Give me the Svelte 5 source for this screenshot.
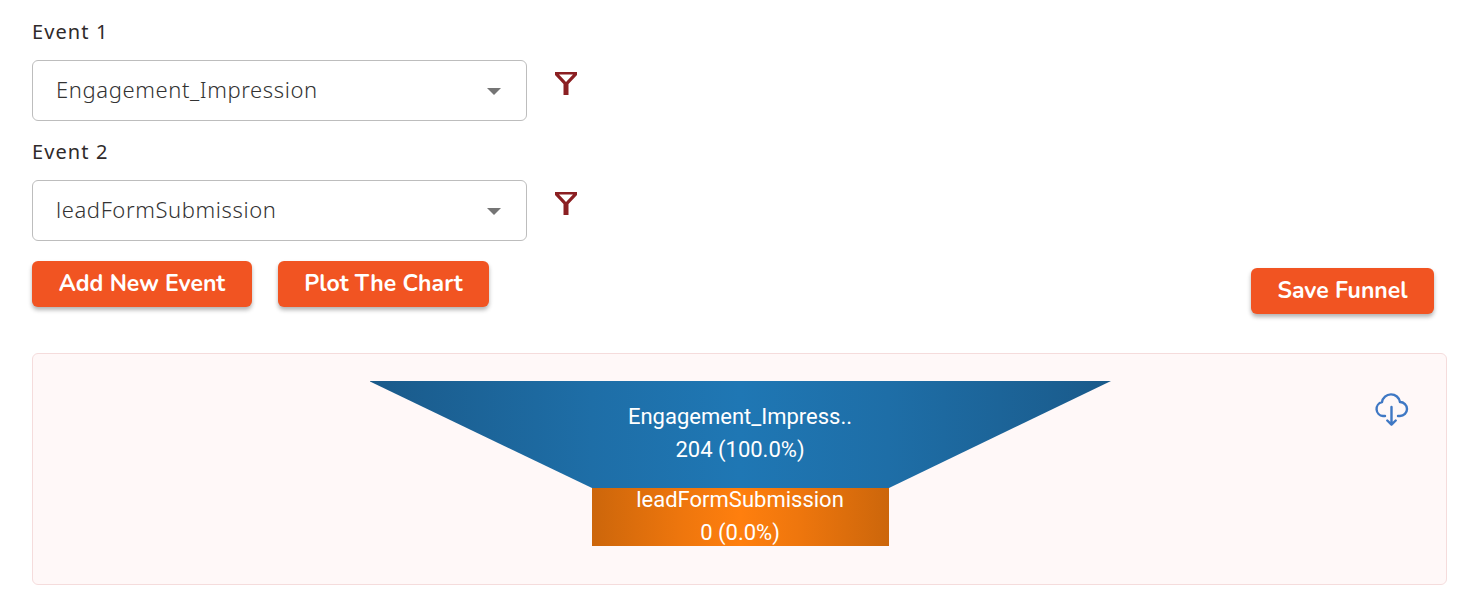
<script>
  const events = [
    { label: 'Event 1', value: 'Engagement_Impression' },
    { label: 'Event 2', value: 'leadFormSubmission' }
  ];
</script>

<div class="page">
  {#each events as event}
    <div class="event">
      <div class="event-label">{event.label}</div>
      <div class="event-row">
        <div class="select">
          <span>{event.value}</span>
          <i class="caret"></i>
        </div>
        <svg class="filter" viewBox="0 0 24 24" width="24" height="24" aria-hidden="true">
          <path d="M1 1h22v3L14.5 13v11h-5V13L1 4z M5 3.6 12 11l7-7.4z" fill="#8b1f22" fill-rule="evenodd" />
        </svg>
      </div>
    </div>
  {/each}

  <div class="actions">
    <div class="actions-left">
      <button class="button add">Add New Event</button>
      <button class="button plot">Plot The Chart</button>
    </div>
    <button class="button save">Save Funnel</button>
  </div>

  <div class="panel">
    <svg class="funnel" width="742" height="165" viewBox="0 0 742 165">
      <defs>
        <linearGradient id="blue" x1="0" x2="1" y1="0" y2="0">
          <stop offset="0" stop-color="#1a5a8a" />
          <stop offset="0.3" stop-color="#1e6ea7" />
          <stop offset="0.5" stop-color="#1f77b4" />
          <stop offset="0.7" stop-color="#1e6ea7" />
          <stop offset="1" stop-color="#1a5a8a" />
        </linearGradient>
        <linearGradient id="orange" x1="0" x2="1" y1="0" y2="0">
          <stop offset="0" stop-color="#cc660b" />
          <stop offset="0.3" stop-color="#ee760d" />
          <stop offset="0.5" stop-color="#ff7f0e" />
          <stop offset="0.7" stop-color="#ee760d" />
          <stop offset="1" stop-color="#cc660b" />
        </linearGradient>
      </defs>
      <polygon points="-1,0 741,0 519,107 222,107" fill="url(#blue)" />
      <rect x="222" y="107" width="297" height="58" fill="url(#orange)" />
      <text x="370" y="43">Engagement_Impress..</text>
      <text x="370" y="76">204 (100.0%)</text>
      <text x="370" y="126">leadFormSubmission</text>
      <text x="370" y="159">0 (0.0%)</text>
    </svg>
    <svg class="download" viewBox="0 0 34 34" width="34" height="34" fill="none" stroke="#3f78c4" stroke-width="2.4" stroke-linecap="round" stroke-linejoin="round" aria-hidden="true">
      <path d="M10 24H8A7 7 0 0 1 7 10.2A9.1 9.1 0 0 1 25 10A7 7 0 0 1 25 24H23" />
      <path d="M16.5 15V32.5M12.3 28.5l4.2 4.2 4.2-4.2" />
    </svg>
  </div>
</div>

<style>
  :global(body) {
    margin: 0;
    background: #fff;
  }

  .page {
    padding: 20px 28px 0 32px;
    font-family: "Noto Sans", sans-serif;
  }

  .event-label {
    height: 24px;
    font-size: 20px;
    line-height: 24px;
    color: #2f2a2a;
    letter-spacing: 1.1px;
  }

  .event-row {
    display: flex;
    align-items: flex-start;
    margin-top: 16px;
    margin-bottom: 19px;
  }

  .select {
    box-sizing: border-box;
    width: 495px;
    height: 61px;
    padding: 0 25px 3px 23px;
    display: flex;
    align-items: center;
    justify-content: space-between;
    background: #fff;
    border: 1px solid #bdbdbd;
    border-radius: 6px;
    font-weight: 300;
    font-size: 22px;
    color: #333;
    letter-spacing: 0.6px;
  }

  .caret {
    width: 0;
    height: 0;
    margin-top: 5px;
    border-left: 7px solid transparent;
    border-right: 7px solid transparent;
    border-top: 7px solid #757575;
  }

  .filter {
    margin: 11px 0 0 27px;
  }

  .actions {
    display: flex;
    align-items: flex-start;
    justify-content: space-between;
    margin-top: 20px;
    padding-right: 13px;
  }

  .actions-left {
    display: flex;
    gap: 26px;
  }

  .button {
    box-sizing: border-box;
    height: 46px;
    padding: 0 0 2px;
    border: none;
    border-radius: 6px;
    background: #f15422;
    color: #fff;
    font-family: "Nunito", "Open Sans", sans-serif;
    font-weight: 700;
    font-size: 23px;
    box-shadow: 0 3px 4px rgba(0, 0, 0, 0.3);
  }

  .add {
    width: 220px;
  }

  .plot {
    width: 211px;
  }

  .save {
    width: 183px;
    margin-top: 7px;
  }

  .panel {
    position: relative;
    box-sizing: border-box;
    height: 232px;
    margin-top: 39px;
    padding-top: 27px;
    display: flex;
    justify-content: center;
    align-items: flex-start;
    background: #fff8f8;
    border: 1px solid #f5dcdc;
    border-radius: 6px;
  }

  .funnel {
    display: block;
    margin-left: 3px;
  }

  .funnel text {
    font-family: Roboto, sans-serif;
    font-size: 22px;
    fill: #fff;
    text-anchor: middle;
  }

  .download {
    position: absolute;
    top: 38px;
    right: 37px;
  }
</style>
